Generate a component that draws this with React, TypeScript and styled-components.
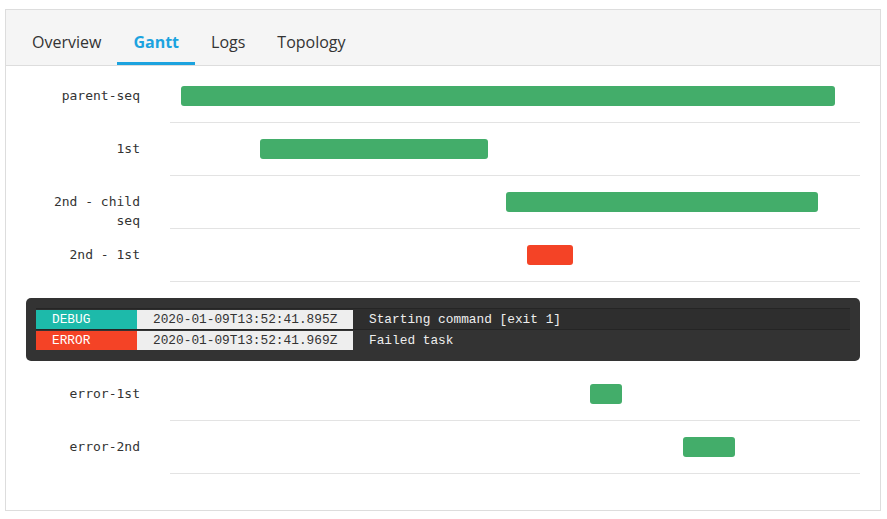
import React from "react";
import styled, { createGlobalStyle } from "styled-components";

const Global = createGlobalStyle`
  html, body { margin: 0; padding: 0; background: #fff; }
  body { font-family: "Open Sans", "Liberation Sans", sans-serif; }
`;

const Page = styled.div`
  padding: 9px 6px 8px 5px;
`;

const Card = styled.div`
  border: 1px solid #dddddd;
  height: 502px;
  box-sizing: border-box;
  background: #fff;
`;

const TabBar = styled.div`
  display: flex;
  background: #f5f5f5;
  border-bottom: 1px solid #dddddd;
  padding: 0 10px;
`;

const Tab = styled.div<{ $active?: boolean }>`
  padding: 20px 16px 8px;
  line-height: 24px;
  font-size: 16px;
  font-weight: ${(p) => (p.$active ? 700 : 400)};
  color: ${(p) => (p.$active ? "#1ca3df" : "#333")};
  border-bottom: 3px solid ${(p) => (p.$active ? "#1ca3df" : "transparent")};
`;

const Content = styled.div`
  padding: 4px 20px 0;
`;

const Row = styled.div`
  display: flex;
  gap: 30px;
  height: 53px;
`;

const Label = styled.div`
  width: 114px;
  flex: none;
  text-align: right;
  font-family: "DejaVu Sans Mono", monospace;
  font-size: 13px;
  line-height: 19px;
  color: #333;
  padding-top: 16px;
`;

const Track = styled.div`
  flex: 1;
  height: 53px;
  box-sizing: border-box;
  border-bottom: 1px solid #e3e3e3;
  padding-top: 16px;
`;

const Bar = styled.div<{ $failed?: boolean }>`
  height: 20px;
  border-radius: 3px;
  background: ${(p) => (p.$failed ? "#f44326" : "#43ad6a")};
`;

const Console = styled.div`
  margin: 16px 0 7px;
  background: #333333;
  border-radius: 5px;
  padding: 10px 10px 11px;
  font-family: "Liberation Mono", monospace;
  font-size: 12.8px;
`;

const LogRow = styled.div<{ $first?: boolean }>`
  display: flex;
  padding-top: 1px;
  border-top: ${(p) => (p.$first ? "1px solid #252525" : "none")};
  border-bottom: ${(p) => (p.$first ? "1px solid #252525" : "none")};
  background: ${(p) => (p.$first ? "#2e2e2e" : "transparent")};
  line-height: 19px;
`;

const Level = styled.div<{ $level: "debug" | "error" }>`
  width: 101px;
  box-sizing: border-box;
  padding-left: 16px;
  color: #fff;
  background: ${(p) => (p.$level === "debug" ? "#1dbaaa" : "#f44326")};
`;

const Stamp = styled.div`
  width: 216px;
  box-sizing: border-box;
  padding-left: 16px;
  background: #eeeeee;
  color: #333;
`;

const Message = styled.div`
  padding-left: 16px;
  color: #eeeeee;
`;

type Task = { label: string; left: number; width: number; failed?: boolean };

const W = 690;
const before: Task[] = [
  { label: "parent-seq", left: 11, width: 654 },
  { label: "1st", left: 90, width: 228 },
  { label: "2nd - child seq", left: 336, width: 312 },
  { label: "2nd - 1st", left: 357, width: 46, failed: true },
];
const after: Task[] = [
  { label: "error-1st", left: 420, width: 32 },
  { label: "error-2nd", left: 513, width: 52 },
];

const TaskRow = ({ t }: { t: Task }) => (
  <Row>
    <Label>{t.label}</Label>
    <Track>
      <Bar
        $failed={t.failed}
        style={{ marginLeft: `${(t.left / W) * 100}%`, width: `${(t.width / W) * 100}%` }}
      />
    </Track>
  </Row>
);

export default function App() {
  return (
    <>
      <Global />
      <Page>
        <Card>
          <TabBar>
            <Tab>Overview</Tab>
            <Tab $active>Gantt</Tab>
            <Tab>Logs</Tab>
            <Tab>Topology</Tab>
          </TabBar>
          <Content>
            {before.map((t) => (
              <TaskRow key={t.label} t={t} />
            ))}
            <Console>
              <LogRow $first>
                <Level $level="debug">DEBUG</Level>
                <Stamp>2020-01-09T13:52:41.895Z</Stamp>
                <Message>Starting command [exit 1]</Message>
              </LogRow>
              <LogRow>
                <Level $level="error">ERROR</Level>
                <Stamp>2020-01-09T13:52:41.969Z</Stamp>
                <Message>Failed task</Message>
              </LogRow>
            </Console>
            {after.map((t) => (
              <TaskRow key={t.label} t={t} />
            ))}
          </Content>
        </Card>
      </Page>
    </>
  );
}
